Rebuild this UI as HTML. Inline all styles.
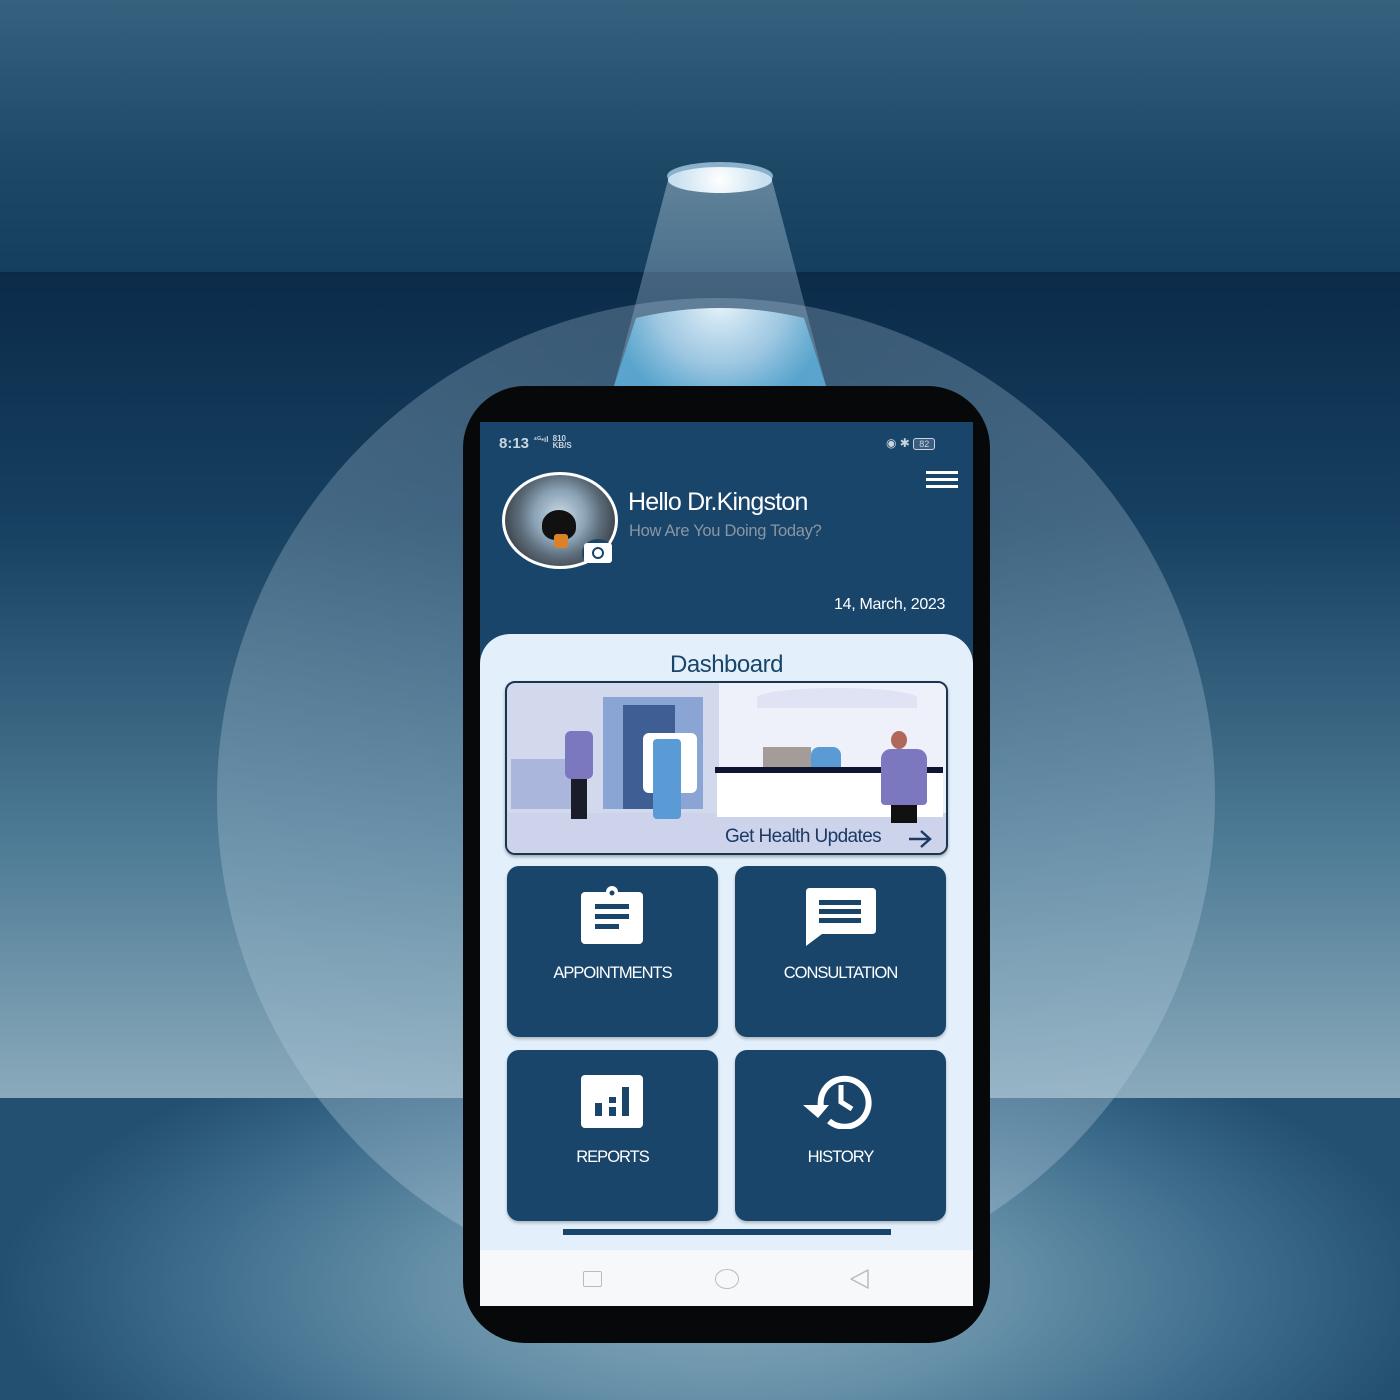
<!DOCTYPE html>
<html><head><meta charset="utf-8"><style>
*{margin:0;padding:0;box-sizing:border-box}
body{width:1400px;height:1400px;overflow:hidden;position:relative;font-family:"Liberation Sans",sans-serif;background:#0c2e4c}
.abs{position:absolute}
#top{left:0;top:0;width:1400px;height:272px;background:linear-gradient(#36627f,#1d4866 60%,#153f5e)}
#wall{left:0;top:272px;width:1400px;height:826px;background:linear-gradient(#0b2b49,#163f60 30%,#4f7c96 70%,#8aaabb)}
#floor{left:0;top:1098px;width:1400px;height:302px;background:radial-gradient(ellipse 720px 280px at 720px 190px,#86a9bb,#6690a8 40%,#3b6a8a 75%,#234f70)}
#circle{left:217px;top:298px;width:998px;height:998px;border-radius:50%;background:radial-gradient(circle at 50% 30%,rgba(160,190,210,.25),rgba(180,205,222,.32) 70%,rgba(200,220,232,.3));}
#cone{left:0;top:0;width:1400px;height:1400px}
.tile{position:absolute;background:#19456b;border-radius:12px;box-shadow:0 2px 3px rgba(0,0,0,.25);color:#fff;text-align:center;font-size:16.5px;letter-spacing:-1px}
.tile span{position:absolute;left:0;right:0;top:98px}
</style></head><body>
<div class="abs" id="top"></div>
<div class="abs" id="wall"></div>
<div class="abs" id="floor"></div>
<div class="abs" id="circle"></div>
<svg class="abs" id="cone" viewBox="0 0 1400 1400">
<defs>
<linearGradient id="cg" x1="0" y1="0" x2="0" y2="1"><stop offset="0" stop-color="#c8dcec" stop-opacity=".4"/><stop offset="1" stop-color="#a8c8e0" stop-opacity=".25"/></linearGradient>
<radialGradient id="glow" cx="720" cy="300" r="110" gradientUnits="userSpaceOnUse"><stop offset="0" stop-color="#eaf5fc"/><stop offset=".6" stop-color="#a8d4ee" stop-opacity=".85"/><stop offset="1" stop-color="#5ab8e6" stop-opacity=".7"/></radialGradient>
<radialGradient id="lamp" cx="720" cy="180" r="45" gradientUnits="userSpaceOnUse"><stop offset="0" stop-color="#fff"/><stop offset="1" stop-color="#c8e0f0"/></radialGradient>
</defs>
<polygon points="668,180 772,180 826,386 614,386" fill="url(#cg)"/>
<path d="M636,318 Q720,298 804,318 L826,386 L614,386 Z" fill="url(#glow)"/>
<ellipse cx="720" cy="176" rx="53" ry="14" fill="#8ab0cc"/>
<ellipse cx="720" cy="180" rx="52" ry="13" fill="url(#lamp)"/>
</svg>
<div class="abs" style="left:463px;top:386px;width:527px;height:957px;background:#060809;border-radius:62px"></div>
<div class="abs" style="left:480px;top:422px;width:493px;height:884px;background:#19456b;overflow:hidden">
 <div class="abs" style="left:19px;top:13px;color:#c9d4de;font-size:15px;font-weight:bold">8:13 <span style="font-size:8px;vertical-align:top">⁴ᴳ▪ıl</span> <span style="font-size:8px;display:inline-block;line-height:7px;vertical-align:top">810<br>KB/S</span></div>
 <div class="abs" style="left:406px;top:14px;color:#c9d4de;font-size:12px">◉ ✱ <span style="border:1px solid #c9d4de;border-radius:3px;font-size:9px;padding:0 5px;background:#3a5d80">82</span></div>
 <div class="abs" style="left:446px;top:49px;width:32px;height:3px;background:#fff;box-shadow:0 7px 0 #fff,0 14px 0 #fff"></div>
 <div class="abs" style="left:22px;top:50px;width:116px;height:97px;border-radius:50%;background:radial-gradient(circle at 50% 45%,#c9dbe8 0,#8aa2b5 35%,#5d6d7b 55%,#3a3e44 80%);border:3px solid #fff"></div>
 <div class="abs" style="left:62px;top:88px;width:34px;height:30px;border-radius:50% 50% 40% 40%;background:#111"></div>
 <div class="abs" style="left:74px;top:112px;width:14px;height:14px;background:#d9822a;border-radius:3px"></div>
 <div class="abs" style="left:102px;top:117px;width:32px;height:28px;border-radius:50%;background:#19456b"></div>
 <div class="abs" style="left:104px;top:121px;width:28px;height:20px;border-radius:3px;background:#fff"></div>
 <div class="abs" style="left:112px;top:125px;width:12px;height:12px;border-radius:50%;border:2.5px solid #19456b"></div>
 <div class="abs" style="left:148px;top:66px;color:#fff;font-size:25px;letter-spacing:-.8px">Hello Dr.Kingston</div>
 <div class="abs" style="left:149px;top:100px;color:#8a96a0;font-size:16.5px;letter-spacing:-.3px">How Are You Doing Today?</div>
 <div class="abs" style="left:354px;top:174px;color:#fff;font-size:16px;letter-spacing:-.3px">14, March, 2023</div>
 <div class="abs" style="left:0;top:212px;width:493px;height:620px;background:#e3f0fb;border-radius:30px 30px 0 0"></div>
 <div class="abs" style="left:0;top:229px;width:493px;text-align:center;color:#19456b;font-size:24px;letter-spacing:-.5px">Dashboard</div>
 <div class="abs" style="left:25px;top:259px;width:443px;height:174px;border:2px solid #1a3550;border-radius:10px;background:#d3d9ec;overflow:hidden;box-shadow:0 2px 3px rgba(0,0,0,.3)">
  <div class="abs" style="left:212px;top:0;width:231px;height:130px;background:#eef1fa"></div>
  <div class="abs" style="left:0;top:130px;width:443px;height:44px;background:#cdd3ea"></div>
  <div class="abs" style="left:96px;top:14px;width:100px;height:112px;background:#8aa4d4"></div>
  <div class="abs" style="left:116px;top:22px;width:52px;height:104px;background:#3f5f94"></div>
  <div class="abs" style="left:4px;top:76px;width:60px;height:50px;background:#aab6dc"></div>
  <div class="abs" style="left:58px;top:48px;width:28px;height:48px;background:#7b78c0;border-radius:6px"></div>
  <div class="abs" style="left:64px;top:96px;width:16px;height:40px;background:#1a1c2a"></div>
  <div class="abs" style="left:136px;top:50px;width:54px;height:60px;background:#fff;border-radius:6px"></div>
  <div class="abs" style="left:146px;top:56px;width:28px;height:80px;background:#5a9bd6;border-radius:4px"></div>
  <div class="abs" style="left:250px;top:5px;width:160px;height:20px;background:#dfe3f3;border-radius:50% 50% 0 0"></div>
  <div class="abs" style="left:208px;top:84px;width:228px;height:6px;background:#0f1530"></div>
  <div class="abs" style="left:210px;top:90px;width:226px;height:44px;background:#fff"></div>
  <div class="abs" style="left:256px;top:64px;width:48px;height:20px;background:#a49c98"></div>
  <div class="abs" style="left:304px;top:64px;width:30px;height:20px;background:#5a9bd6;border-radius:8px 8px 0 0"></div>
  <div class="abs" style="left:374px;top:66px;width:46px;height:56px;background:#7b78c0;border-radius:10px 10px 4px 4px"></div>
  <div class="abs" style="left:384px;top:48px;width:16px;height:18px;background:#b0685a;border-radius:50%"></div>
  <div class="abs" style="left:384px;top:122px;width:26px;height:18px;background:#111"></div>
  <div class="abs" style="left:218px;top:143px;color:#1b3a66;font-size:19px;letter-spacing:-.6px">Get Health Updates</div>
  <svg class="abs" style="left:400px;top:145px" width="26" height="22" viewBox="0 0 26 22"><path d="M2 11H23M14 3L23 11L14 19" stroke="#1b3a66" stroke-width="2.4" fill="none"/></svg>
 </div>
 <div class="tile" style="left:27px;top:444px;width:211px;height:171px">
  <svg class="abs" style="left:74px;top:20px" width="62" height="58" viewBox="0 0 62 58"><rect x="0" y="6" width="62" height="52" rx="4" fill="#fff"/><circle cx="31" cy="6" r="6" fill="#fff"/><circle cx="31" cy="7" r="2.5" fill="#19456b"/><rect x="14" y="18" width="34" height="5" fill="#19456b"/><rect x="14" y="28" width="34" height="5" fill="#19456b"/><rect x="14" y="38" width="24" height="5" fill="#19456b"/></svg>
  <span>APPOINTMENTS</span></div>
 <div class="tile" style="left:255px;top:444px;width:211px;height:171px">
  <svg class="abs" style="left:71px;top:22px" width="70" height="58" viewBox="0 0 70 58"><path d="M4 0H66Q70 0 70 4V42Q70 46 66 46H16L0 58V4Q0 0 4 0Z" fill="#fff"/><rect x="13" y="12" width="42" height="5" fill="#19456b"/><rect x="13" y="21" width="42" height="5" fill="#19456b"/><rect x="13" y="30" width="42" height="5" fill="#19456b"/></svg>
  <span>CONSULTATION</span></div>
 <div class="tile" style="left:27px;top:628px;width:211px;height:171px">
  <svg class="abs" style="left:74px;top:25px" width="62" height="53" viewBox="0 0 62 53"><rect width="62" height="53" rx="4" fill="#fff"/><rect x="14" y="28" width="7" height="13" fill="#19456b"/><rect x="28" y="22" width="7" height="6" fill="#19456b"/><rect x="28" y="32" width="7" height="9" fill="#19456b"/><rect x="41" y="12" width="7" height="29" fill="#19456b"/></svg>
  <span>REPORTS</span></div>
 <div class="tile" style="left:255px;top:628px;width:211px;height:171px">
  <svg class="abs" style="left:68px;top:23px" width="74" height="56" viewBox="0 0 74 56"><path d="M18 34A24 24 0 1 1 26 48" stroke="#fff" stroke-width="6" fill="none"/><path d="M0 32H26L15 45Z" fill="#fff"/><path d="M38 12V29L49 36" stroke="#fff" stroke-width="5" fill="none"/></svg>
  <span>HISTORY</span></div>
 <div class="abs" style="left:83px;top:807px;width:328px;height:6px;background:#19456b"></div>
 <div class="abs" style="left:0;top:828px;width:493px;height:56px;background:#f7f8fa"></div>
 <div class="abs" style="left:103px;top:849px;width:19px;height:16px;border:1.5px solid #bbb;border-radius:2px"></div>
 <div class="abs" style="left:235px;top:847px;width:24px;height:20px;border:1.5px solid #bbb;border-radius:50%"></div>
 <svg class="abs" style="left:369px;top:846px" width="22" height="22" viewBox="0 0 22 22"><path d="M19 2V20L2 11Z" stroke="#bbb" stroke-width="1.5" fill="none" stroke-linejoin="round"/></svg>
</div>
</body></html>
